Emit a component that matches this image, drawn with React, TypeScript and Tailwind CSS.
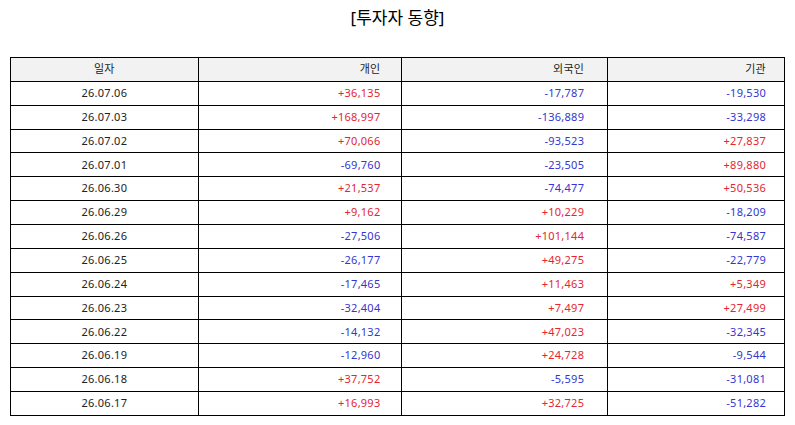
const rows: [string, string, string, string][] = [
  ["26.07.06", "+36,135", "-17,787", "-19,530"],
  ["26.07.03", "+168,997", "-136,889", "-33,298"],
  ["26.07.02", "+70,066", "-93,523", "+27,837"],
  ["26.07.01", "-69,760", "-23,505", "+89,880"],
  ["26.06.30", "+21,537", "-74,477", "+50,536"],
  ["26.06.29", "+9,162", "+10,229", "-18,209"],
  ["26.06.26", "-27,506", "+101,144", "-74,587"],
  ["26.06.25", "-26,177", "+49,275", "-22,779"],
  ["26.06.24", "-17,465", "+11,463", "+5,349"],
  ["26.06.23", "-32,404", "+7,497", "+27,499"],
  ["26.06.22", "-14,132", "+47,023", "-32,345"],
  ["26.06.19", "-12,960", "+24,728", "-9,544"],
  ["26.06.18", "+37,752", "-5,595", "-31,081"],
  ["26.06.17", "+16,993", "+32,725", "-51,282"],
];

function Num({ v, pad }: { v: string; pad: string }) {
  const color = v.startsWith("-") ? "text-[#3535d0]" : "text-[#e3262f]";
  return <td className={`border border-black text-right ${pad} ${color}`}>{v}</td>;
}

export default function App() {
  return (
    <div
      className="w-[795px] h-[425px] bg-white pt-[6px]"
      style={{ fontFamily: '"Noto Sans", "Noto Sans CJK KR", sans-serif' }}
    >
      <h1 className="text-center text-[17px] leading-[24px] text-black">[투자자 동향]</h1>
      <div className="px-[10px] pt-[27px]">
        <table className="w-[775px] border-collapse text-[11px] tracking-[0.25px] text-[#222]">
          <colgroup>
            <col className="w-[188px]" />
            <col className="w-[204px]" />
            <col className="w-[206px]" />
            <col className="w-[177px]" />
          </colgroup>
          <thead>
            <tr className="h-[23.87px] bg-[#f2f2f2]">
              <th className="border border-black font-normal text-center">일자</th>
              <th className="border border-black font-normal text-right pr-[21px]">개인</th>
              <th className="border border-black font-normal text-right pr-[23px]">외국인</th>
              <th className="border border-black font-normal text-right pr-[18px]">기관</th>
            </tr>
          </thead>
          <tbody>
            {rows.map((r) => (
              <tr key={r[0]} className="h-[23.87px]">
                <td className="border border-black text-center">{r[0]}</td>
                <Num v={r[1]} pad="pr-[21px]" />
                <Num v={r[2]} pad="pr-[23px]" />
                <Num v={r[3]} pad="pr-[18px]" />
              </tr>
            ))}
          </tbody>
        </table>
      </div>
    </div>
  );
}
